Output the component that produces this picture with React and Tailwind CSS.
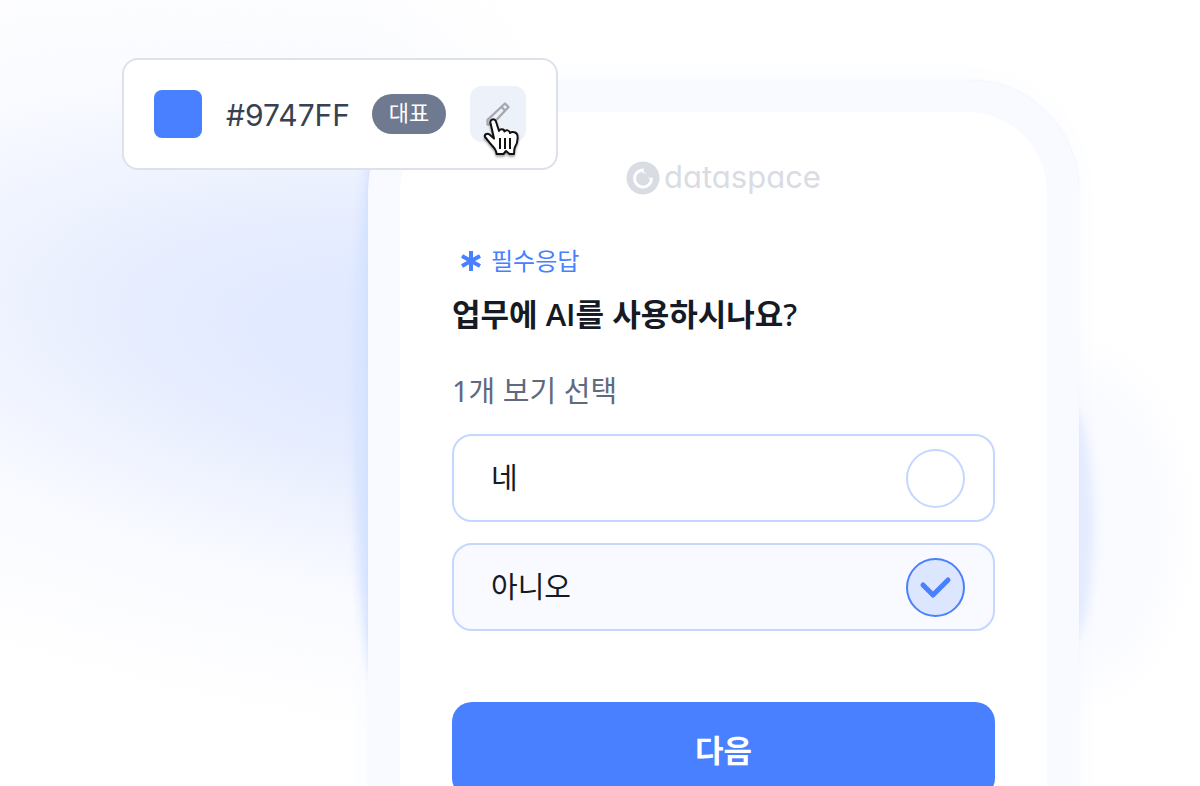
import { useState } from "react"

const options = [
  { id: "yes", label: "네" },
  { id: "no", label: "아니오" },
]

function LogoMark() {
  return (
    <svg viewBox="0 0 34 34" className="size-[34px]" fill="none" aria-hidden="true">
      <circle cx="17" cy="17" r="16.5" fill="#d9dce3" />
      <path d="M16.500 9A8.500 8.500 0 1 0 25.500 18" stroke="#fff" strokeWidth="3" />
      <path d="M17 7.500v5h3M26.800 17.500h-5v-2" stroke="#fff" strokeWidth="1.500" />
      <circle cx="17" cy="18" r="6" fill="#d9dce3" />
    </svg>
  )
}

function HandCursor() {
  return (
    <svg viewBox="0 0 36 40" className="absolute left-[13px] top-[31px] h-10 w-9 drop-shadow-[0_2px_1px_rgba(0,0,0,0.35)]" aria-hidden="true">
      <path
        d="M7.500 6C6.500 2.500 11.500.5 13 4.500L16 14c1-2.500 5-2.500 5.500.5C23 12.500 26.500 13 27 16c2-2 7-1 7.500 2.500C35 23 34 27 32 30c-1 2-1 4-1 7h-4.500L23 34l-2.500 3h-7c0-3-2-6-4.500-8.500C6.500 26 4.500 23 2 20c-1-2.500 2-4 4.500-2.500l4.500 4z"
        fill="#fff"
        stroke="#111"
        strokeWidth="2"
        strokeLinejoin="round"
      />
      <path d="M17 21v11M22 21v11M27 21v11" stroke="#111" strokeWidth="2" />
    </svg>
  )
}

function ColorChip() {
  return (
    <div className="absolute left-[122px] top-[58px] z-10 flex items-center rounded-2xl border-2 border-[#dce1ea] bg-white px-[30px] py-[26px]">
      <span className="size-12 rounded-lg bg-[#4880ff]"></span>
      <span className="ml-6 pt-0.5 font-['Inter',sans-serif] text-[30px] leading-10 text-[#374151]">#9747FF</span>
      <span className="ml-[22px] h-10 w-[74px] rounded-full bg-[#6f7990] text-center text-[22px] leading-9 text-white">대표</span>
      <button type="button" aria-label="색상 편집" className="relative ml-6 flex size-14 items-center justify-center rounded-xl bg-[#edf1f9]">
        <svg viewBox="0 0 24 24" className="size-7" fill="none" stroke="#a6a8ad" strokeWidth="2" strokeLinejoin="round" aria-hidden="true">
          <path d="M3 21v-4L18 3l3 3L7 21zM15 6l3 3" />
        </svg>
        <HandCursor />
      </button>
    </div>
  )
}

function Backdrop() {
  return (
    <div className="pointer-events-none absolute inset-0 overflow-hidden" aria-hidden="true">
      <div className="absolute inset-y-0 left-0 w-[560px] overflow-hidden [mask-image:linear-gradient(to_right,black_65%,transparent)]">
        <div className="absolute -left-[600px] -top-[50px] h-[800px] w-[2100px] rotate-[8deg] bg-[radial-gradient(closest-side,#e0e9ff_0%,#e2eaff_18%,#e7edff_30%,#ecf1fe_40%,#f3f6ff_52%,#fafbff_66%,transparent_100%)]"></div>
      </div>
      <div className="absolute left-[354px] top-[120px] h-[580px] w-[60px] rounded-[50%] bg-[#d8e5ff] blur-[5px]"></div>
      <div className="absolute left-[960px] top-[330px] h-[390px] w-[240px] bg-[radial-gradient(closest-side,#f8faff,#fafbff_60%,transparent)]"></div>
      <div className="absolute left-[1050px] top-[410px] h-[230px] w-[44px] rounded-[50%] bg-[#e6edff] blur-[4px]"></div>
    </div>
  )
}

function App() {
  const [answer, setAnswer] = useState("no")

  return (
    <main className="relative h-screen overflow-hidden bg-white font-['Noto_Sans','Noto_Sans_CJK_KR',sans-serif]">
      <Backdrop />
      <ColorChip />

      {/* Phone */}
      <div className="relative ml-[368px] mr-[121px] mt-20 rounded-t-[110px] bg-[#f8faff] px-8 pt-8 shadow-[0_0_1px_rgba(60,80,160,0.15),0_0_24px_rgba(72,128,255,0.03)]">
        <form className="rounded-t-[80px] bg-white px-[52px] pb-16 pt-[49px]">
          <div className="flex items-center justify-center gap-1 text-[#d9dce3]">
            <LogoMark />
            <span className="pb-0.5 font-['Inter',sans-serif] text-[31px] leading-8 [font-feature-settings:'cv11']">dataspace</span>
          </div>

          <p className="mt-12 flex items-center gap-2 pl-[7px] text-2xl leading-9 text-[#4880ff]">
            <svg viewBox="0 0 24 24" className="size-6" stroke="currentColor" strokeWidth="4" aria-hidden="true">
              <path d="M12 2v20M3 7l18 10M21 7L3 17" />
            </svg>
            필수응답
          </p>
          <h1 className="mt-[11px] text-[31px] font-bold leading-[48px] text-[#151a24]">
            업무에 <span className="font-['Open_Sans',sans-serif] font-semibold">AI</span>를 사용하시나요<span className="font-medium">?</span>
          </h1>

          <fieldset className="mt-7">
            <legend className="text-[29px] leading-[50px] text-[#606a7e]">1개 보기 선택</legend>
            <div className="mt-[18px] flex flex-col gap-[21px]">
              {options.map((option) => (
                <label
                  key={option.id}
                  htmlFor={option.id}
                  className="flex h-[88px] items-center justify-between rounded-[20px] border-2 border-[#c5d7ff] bg-white pl-[37px] pr-7 text-[29px] text-[#151a24] has-checked:bg-[#f8faff]"
                >
                  {option.label}
                  <span className="grid">
                    <input
                      id={option.id}
                      type="radio"
                      name="answer"
                      checked={answer === option.id}
                      onChange={() => setAnswer(option.id)}
                      className="peer col-start-1 row-start-1 size-[59px] appearance-none rounded-full border-2 border-[#c5d7ff] bg-white checked:border-[#4880ff] checked:bg-[#dce6ff]"
                    />
                    <svg
                      viewBox="0 0 59 59"
                      className="pointer-events-none invisible col-start-1 row-start-1 size-[59px] peer-checked:visible"
                      fill="none"
                      stroke="#4880ff"
                      strokeWidth="5"
                      strokeLinecap="round"
                      strokeLinejoin="round"
                      aria-hidden="true"
                    >
                      <path d="M17 27l10 10 15-15" />
                    </svg>
                  </span>
                </label>
              ))}
            </div>
          </fieldset>

          <button type="button" className="mt-[71px] h-24 w-full rounded-[20px] bg-[#4880ff] text-[31px] font-bold text-white">
            다음
          </button>
        </form>
      </div>
    </main>
  )
}

export default App
